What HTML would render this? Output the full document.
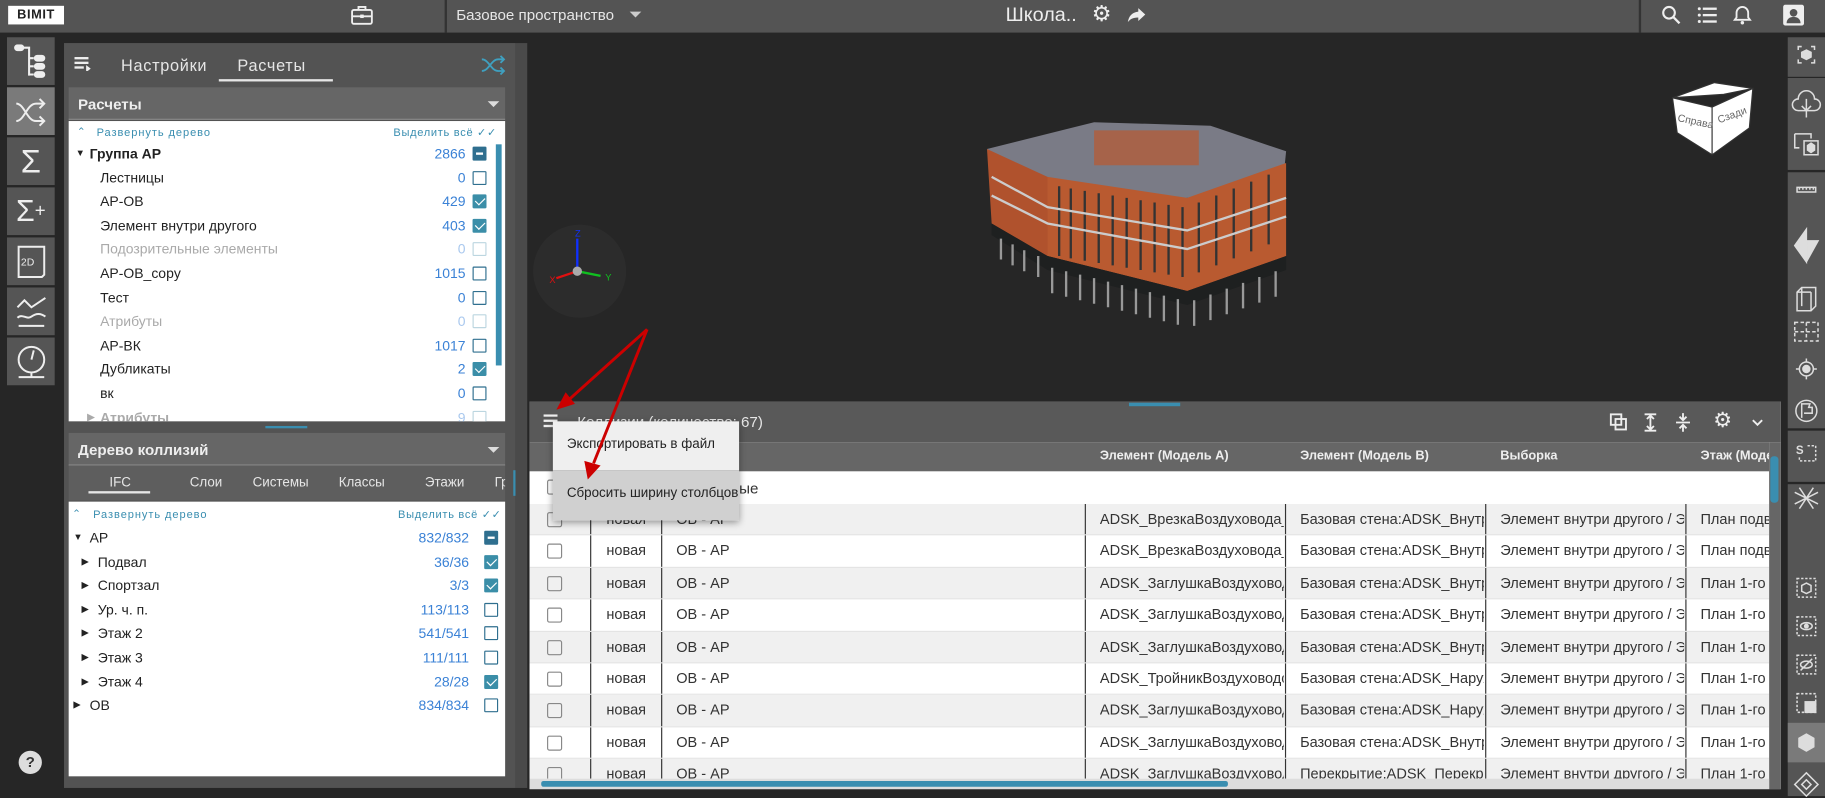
<!DOCTYPE html>
<html><head><meta charset="utf-8">
<style>
*{box-sizing:border-box;margin:0;padding:0}
body{width:1825px;height:796px;overflow:hidden;background:#262626;font-family:"Liberation Sans",sans-serif;position:relative;font-size:12px}
#w{position:absolute;left:0;top:0;width:1568px;height:684px;transform:scale(1.16390);transform-origin:0 0}
.a{position:absolute}
.top{left:0;top:0;width:1568px;height:28px;background:#545454}
.lb{left:6px;width:41px;height:41px;background:#555;display:flex;align-items:center;justify-content:center}
.row{position:absolute;left:0;width:100%;height:20.6px;font-size:12px;color:#222;line-height:20.6px}
.num{position:absolute;right:26px;color:#3b82d6;font-size:12px}
.cb{position:absolute;right:8px;top:4px;width:12px;height:12px;border:1.5px solid #2f6f8f;border-radius:1px;background:#fff}
.cb.on{background:#3b8ea8;border-color:#3b8ea8}
.cb.on:after{content:"";position:absolute;left:2.5px;top:0px;width:4px;height:7px;border:solid #fff;border-width:0 1.5px 1.5px 0;transform:rotate(45deg)}
.cb.dim{border-color:#bcd6e0}
.cb.min{background:#2f6f8f;border-color:#2f6f8f}
.cb.min:after{content:"";position:absolute;left:2px;top:4px;width:6px;height:1.5px;background:#fff}
.dim{color:#aaa}
.tr{position:absolute;left:0;width:1065px;height:27.4px;font-size:12.5px;color:#333;line-height:27.4px;border-bottom:1px solid #e4e4e4}
.tr span{position:absolute;white-space:nowrap;overflow:hidden}
.rb{left:1536px;width:32px;background:#555}
</style></head><body><div id="w">
<div class="a top"></div>
<div class="a" style="left:7px;top:5px;width:48px;height:16px;background:#fff;color:#222;font-weight:bold;font-size:11px;text-align:center;line-height:16px;letter-spacing:0.5px">BIMIT</div>
<svg class="a" style="left:301px;top:4px" width="20" height="18" viewBox="0 0 20 18"><rect x="1.5" y="4.5" width="17" height="12" rx="1.5" fill="none" stroke="#eee" stroke-width="1.6"/><path d="M7 4.5V2h6v2.5M1.5 10h17" stroke="#eee" stroke-width="1.6" fill="none"/><rect x="8.5" y="8.5" width="3" height="3" fill="#eee"/></svg>
<div class="a" style="left:382px;top:0;width:2px;height:28px;background:#333"></div>
<div class="a" style="left:392px;top:5px;color:#e6e6e6;font-size:13px">Базовое пространство</div>
<div class="a" style="left:541px;top:10px;border:5px solid transparent;border-top:5px solid #ccc"></div>
<div class="a" style="left:864px;top:3px;color:#eee;font-size:17px">Школа..</div>
<div class="a" style="left:938px;top:1px;color:#eee;font-size:19px">⚙</div>
<svg class="a" style="left:968px;top:5px" width="18" height="16" viewBox="0 0 18 16"><path d="M10 2l6 5.5-6 5.5V10C5 10 3 11.5 1 14c1-5 3-8 9-9z" fill="#eee"/></svg>
<div class="a" style="left:1408px;top:0;width:2px;height:28px;background:#333"></div>
<svg class="a" style="left:1427px;top:4px" width="18" height="18"><circle cx="7" cy="7" r="5" stroke="#eee" stroke-width="1.8" fill="none"/><path d="M11 11l5 5" stroke="#eee" stroke-width="2"/></svg>
<svg class="a" style="left:1458px;top:5px" width="18" height="16"><g fill="#eee"><circle cx="2" cy="2.5" r="1.3"/><circle cx="2" cy="8" r="1.3"/><circle cx="2" cy="13.5" r="1.3"/><rect x="5" y="1.5" width="12" height="2"/><rect x="5" y="7" width="12" height="2"/><rect x="5" y="12.5" width="12" height="2"/></g></svg>
<svg class="a" style="left:1488px;top:4px" width="20" height="18"><path d="M9 2a5 5 0 0 1 5 5v4l1.5 2h-13L4 11V7a5 5 0 0 1 5-5z" fill="none" stroke="#eee" stroke-width="1.6"/><circle cx="9" cy="15.5" r="1.5" fill="#eee"/></svg>
<svg class="a" style="left:1532px;top:4px" width="18" height="18"><rect width="18" height="18" rx="2" fill="#eee"/><circle cx="9" cy="7" r="3.3" fill="#545454"/><path d="M3 16c0-4 3-5.5 6-5.5s6 1.5 6 5.5z" fill="#545454"/></svg>

<div class="a lb" style="top:32px"><svg width="30" height="30" fill="none" stroke="#eee" stroke-width="1.8"><rect x="1" y="1" width="7" height="4" rx="2" fill="#eee"/><path d="M8 3h5v24M13 12h4M13 19h4M13 26h4"/><rect x="18" y="10" width="8" height="4" rx="2" fill="#eee"/><rect x="18" y="17" width="8" height="4" rx="2" fill="#eee"/><rect x="18" y="24" width="8" height="4" rx="2" fill="#eee"/></svg></div>
<div class="a lb" style="top:75px;background:#7a7a7a"><svg width="30" height="30" fill="none" stroke="#eee" stroke-width="1.7"><path d="M2 8c7 0 9 15 17 15h6M2 23c7 0 9-15 17-15h6M22 4l4 4-4 4M22 19l4 4-4 4"/></svg></div>
<div class="a lb" style="top:118px;color:#eee;font-size:28px">Σ</div>
<div class="a lb" style="top:161px;color:#eee;font-size:26px">Σ<span style="font-size:16px">+</span></div>
<div class="a lb" style="top:204px"><svg width="26" height="30" fill="none" stroke="#eee" stroke-width="1.7"><path d="M2 2h22v24l-2 2H2z"/><text x="4" y="18" font-size="9" fill="#eee" stroke="none" font-family="Liberation Sans">2D</text></svg></div>
<div class="a lb" style="top:247px"><svg width="28" height="28" fill="none" stroke="#eee" stroke-width="1.7"><path d="M2 10l6-6 6 6 12-8M2 19c4-4 8 2 12-1s8-3 12 0M3 26h22"/></svg></div>
<div class="a lb" style="top:290px"><svg width="30" height="30" fill="none" stroke="#eee" stroke-width="1.7"><circle cx="15" cy="13" r="11"/><path d="M15 13l2-8M4 28h22M15 24v4"/></svg></div>
<div class="a" style="left:16px;top:645px;width:20px;height:20px;border-radius:50%;background:#ddd;color:#333;font-weight:bold;text-align:center;line-height:20px;font-size:13px">?</div>

<div class="a" style="left:55px;top:37px;width:388px;height:640px;background:#535353"></div>
<svg class="a" style="left:64px;top:49px" width="14" height="12" fill="#eee"><rect width="12" height="2"/><rect y="4" width="12" height="2"/><rect y="8" width="8" height="2"/><path d="M10 7l4 3-4 3z"/></svg>
<div class="a" style="left:104px;top:48px;color:#e6e6e6;font-size:14px;letter-spacing:0.6px">Настройки</div>
<div class="a" style="left:204px;top:48px;color:#e6e6e6;font-size:14px;letter-spacing:0.6px">Расчеты</div>
<div class="a" style="left:188px;top:68px;width:98px;height:2px;background:#e6e6e6"></div>
<svg class="a" style="left:413px;top:46px" width="22" height="20" fill="none" stroke="#3fa0c0" stroke-width="1.6"><path d="M1 5c6 0 8 10 14 10h5M1 15c6 0 8-10 14-10h5M17 2l3 3-3 3M17 12l3 3-3 3"/></svg>

<div class="a" style="left:59px;top:75px;width:375px;height:28px;background:#666;border-bottom:1px solid #888"></div>
<div class="a" style="left:67px;top:82px;color:#eee;font-size:13px;font-weight:bold">Расчеты</div>
<div class="a" style="left:419px;top:87px;border:5px solid transparent;border-top:5px solid #ddd"></div>
<div class="a" style="left:59px;top:104px;width:375px;height:258px;background:#fff;overflow:hidden">
 <div class="a" style="left:7px;top:4px;color:#3a8eb0;font-size:9px">⌃</div>
 <div class="a" style="left:24px;top:5px;color:#3a8eb0;font-size:9.5px;letter-spacing:0.8px">Развернуть дерево</div>
 <div class="a" style="left:279px;top:5px;color:#3a8eb0;font-size:9.5px;letter-spacing:0.6px">Выделить всё ✓✓</div>
 <div class="a" style="left:367px;top:20px;width:5px;height:190px;background:#3a8eb0"></div>
 <div style="position:absolute;left:0;top:18px;width:367px">
  <div class="row" style="top:0;font-weight:bold"><span style="position:absolute;left:6px;font-size:8px">▼</span><span style="position:absolute;left:18px">Группа АР</span><span class="num" style="font-weight:normal">2866</span><span class="cb min"></span></div>
  <div class="row" style="top:20.6px"><span style="position:absolute;left:27px">Лестницы</span><span class="num">0</span><span class="cb"></span></div>
  <div class="row" style="top:41.2px"><span style="position:absolute;left:27px">АР-ОВ</span><span class="num">429</span><span class="cb on"></span></div>
  <div class="row" style="top:61.8px"><span style="position:absolute;left:27px">Элемент внутри другого</span><span class="num">403</span><span class="cb on"></span></div>
  <div class="row dim" style="top:82.4px"><span style="position:absolute;left:27px">Подозрительные элементы</span><span class="num" style="color:#a9c8ee">0</span><span class="cb dim"></span></div>
  <div class="row" style="top:103px"><span style="position:absolute;left:27px">АР-ОВ_copy</span><span class="num">1015</span><span class="cb"></span></div>
  <div class="row" style="top:123.6px"><span style="position:absolute;left:27px">Тест</span><span class="num">0</span><span class="cb"></span></div>
  <div class="row dim" style="top:144.2px"><span style="position:absolute;left:27px">Атрибуты</span><span class="num" style="color:#a9c8ee">0</span><span class="cb dim"></span></div>
  <div class="row" style="top:164.8px"><span style="position:absolute;left:27px">АР-ВК</span><span class="num">1017</span><span class="cb"></span></div>
  <div class="row" style="top:185.4px"><span style="position:absolute;left:27px">Дубликаты</span><span class="num">2</span><span class="cb on"></span></div>
  <div class="row" style="top:206px"><span style="position:absolute;left:27px">вк</span><span class="num">0</span><span class="cb"></span></div>
  <div class="row dim" style="top:226.6px;font-weight:bold"><span style="position:absolute;left:16px;font-size:8px">▶</span><span style="position:absolute;left:27px">Атрибуты</span><span class="num" style="color:#a9c8ee;font-weight:normal">9</span><span class="cb dim"></span></div>
 </div>
</div>
<div class="a" style="left:228px;top:366px;width:36px;height:2px;background:#3a8eb0"></div>
<div class="a" style="left:59px;top:372px;width:375px;height:28px;background:#666;border-bottom:1px solid #888"></div>
<div class="a" style="left:67px;top:379px;color:#eee;font-size:13px;font-weight:bold">Дерево коллизий</div>
<div class="a" style="left:419px;top:384px;border:5px solid transparent;border-top:5px solid #ddd"></div>
<div class="a" style="left:59px;top:400px;width:375px;height:30px;background:#5e5e5e;color:#e6e6e6;font-size:11.5px;overflow:hidden">
 <span class="a" style="left:35px;top:9px">IFC</span><span class="a" style="left:17px;top:22px;width:53px;height:2px;background:#e6e6e6"></span>
 <span class="a" style="left:104px;top:9px">Слои</span><span class="a" style="left:158px;top:9px">Системы</span><span class="a" style="left:232px;top:9px">Классы</span><span class="a" style="left:306px;top:9px">Этажи</span><span class="a" style="left:366px;top:9px;white-space:nowrap">Группировки</span>
</div>
<div class="a" style="left:441px;top:404px;width:2px;height:22px;background:#3a8eb0"></div>
<div class="a" style="left:59px;top:431px;width:375px;height:236px;background:#fff;overflow:hidden">
 <div class="a" style="left:3px;top:5px;color:#3a8eb0;font-size:9px">⌃</div>
 <div class="a" style="left:21px;top:6px;color:#3a8eb0;font-size:9.5px;letter-spacing:0.8px">Развернуть дерево</div>
 <div class="a" style="left:283px;top:6px;color:#3a8eb0;font-size:9.5px;letter-spacing:0.6px">Выделить всё ✓✓</div>
 <div style="position:absolute;left:0;top:21px;width:375px">
  <div class="row" style="top:0"><span style="position:absolute;left:4px;font-size:8px">▼</span><span style="position:absolute;left:18px">АР</span><span class="num" style="right:31px">832/832</span><span class="cb min" style="right:6px"></span></div>
  <div class="row" style="top:20.6px"><span style="position:absolute;left:11px;font-size:8px">▶</span><span style="position:absolute;left:25px">Подвал</span><span class="num" style="right:31px">36/36</span><span class="cb on" style="right:6px"></span></div>
  <div class="row" style="top:41.2px"><span style="position:absolute;left:11px;font-size:8px">▶</span><span style="position:absolute;left:25px">Спортзал</span><span class="num" style="right:31px">3/3</span><span class="cb on" style="right:6px"></span></div>
  <div class="row" style="top:61.8px"><span style="position:absolute;left:11px;font-size:8px">▶</span><span style="position:absolute;left:25px">Ур. ч. п.</span><span class="num" style="right:31px">113/113</span><span class="cb" style="right:6px"></span></div>
  <div class="row" style="top:82.4px"><span style="position:absolute;left:11px;font-size:8px">▶</span><span style="position:absolute;left:25px">Этаж 2</span><span class="num" style="right:31px">541/541</span><span class="cb" style="right:6px"></span></div>
  <div class="row" style="top:103px"><span style="position:absolute;left:11px;font-size:8px">▶</span><span style="position:absolute;left:25px">Этаж 3</span><span class="num" style="right:31px">111/111</span><span class="cb" style="right:6px"></span></div>
  <div class="row" style="top:123.6px"><span style="position:absolute;left:11px;font-size:8px">▶</span><span style="position:absolute;left:25px">Этаж 4</span><span class="num" style="right:31px">28/28</span><span class="cb on" style="right:6px"></span></div>
  <div class="row" style="top:144.2px"><span style="position:absolute;left:4px;font-size:8px">▶</span><span style="position:absolute;left:18px">ОВ</span><span class="num" style="right:31px">834/834</span><span class="cb" style="right:6px"></span></div>
 </div>
</div>

<div class="a" style="left:443px;top:37px;width:10px;height:640px;background:#4a4a4a"></div>
<div class="a" style="left:458px;top:193px;width:80px;height:80px;border-radius:50%;background:#2c2c2c"></div>
<svg class="a" style="left:458px;top:193px" width="80" height="80"><path d="M38 40V12" stroke="#1030ff" stroke-width="2"/><path d="M38 40l20 4" stroke="#10c020" stroke-width="2"/><path d="M38 40l-18 6" stroke="#e01010" stroke-width="2"/><circle cx="38" cy="40" r="4" fill="#aaa"/><text x="36" y="10" fill="#1030ff" font-size="8" font-family="Liberation Sans">Z</text><text x="62" y="48" fill="#10c020" font-size="8" font-family="Liberation Sans">Y</text><text x="14" y="50" fill="#e01010" font-size="8" font-family="Liberation Sans">X</text></svg>
<svg class="a" style="left:840px;top:100px" width="270" height="195" viewBox="0 0 270 195">
 <polygon points="8,28 100,5 200,8 265,30 262,60 180,70 60,80" fill="#7a7b86"/>
 <polygon points="8,28 60,52 60,120 12,92" fill="#b0522d"/>
 <polygon points="60,52 180,70 265,40 265,120 180,150 60,120" fill="#b95a30"/>
 <g stroke="#333" stroke-width="2"><path d="M70 60v60M80 62v60M92 64v60M104 66v60M116 68v60M128 70v60M140 72v60M152 74v60M164 76v60M176 78v60M190 74v60M205 68v60M220 62v60M235 56v60M250 50v60"/></g>
 <path d="M12 52L60 78 180 98 265 70M12 68L60 92 180 114 265 86" stroke="#ccc" stroke-width="2" fill="none"/>
 <polygon points="60,120 180,150 265,120 265,132 180,162 60,132 12,102 12,92" fill="#1e2020"/>
 <g stroke="#999" stroke-width="2"><path d="M20 105v18M30 110v18M40 115v18M52 120v18M64 130v22M76 133v22M88 136v22M100 139v22M112 142v22M124 145v22M136 148v22M148 151v22M160 154v22M172 157v22M186 158v22M200 153v22M214 148v22M228 143v22M242 138v22M256 133v22"/></g>
 <rect x="100" y="12" width="90" height="30" fill="#b95a30" opacity="0.7"/>
</svg>
<svg class="a" style="left:1433px;top:68px" width="74" height="68"><polygon points="4,16 48,13 73,8 40,3" fill="#fff" stroke="#333"/><polygon points="4,16 38,24 38,65 8,46" fill="#fff" stroke="#333"/><polygon points="38,24 73,8 70,42 38,65" fill="#fff" stroke="#333"/><text x="8" y="36" font-size="9" fill="#666" font-family="Liberation Sans" transform="rotate(12 8 36)">Справа</text><text x="44" y="38" font-size="9" fill="#666" font-family="Liberation Sans" transform="rotate(-20 44 38)">Сзади</text></svg>

<div class="a rb" style="top:32px;height:34px"></div>
<div class="a rb" style="top:67px;height:79px"></div>
<div class="a rb" style="top:148px;height:220px"></div>
<div class="a rb" style="top:370px;height:44px"></div>
<div class="a rb" style="top:416px;height:268px"></div>
<svg class="a" style="left:1536px;top:31px" width="32" height="653" fill="none" stroke="#ddd" stroke-width="1.3">
 <path d="M9 12V9h3M20 9h3v3M23 20v3h-3M12 23H9v-3"/><polygon points="16,12 20,14 20,18 16,20 12,18 12,14" fill="#ddd"/>
 <path d="M16 70V54M12 60l4 4 4-4M9 64a5 5 0 0 1 0-10 7 7 0 0 1 14 0 5 5 0 0 1 0 10z"/>
 <path d="M6 84h14v4M6 84v12h4M14 90h12v12H14z"/><polygon points="20,92 23,94 23,98 20,100 17,98 17,94" fill="#ddd"/>
 <path d="M8 130h16v4H8zM10 130v2M13 130v2M16 130v2M19 130v2M22 130v2"/>
 <path d="M6 180l10-14v28zM16 166v10h10L16 194" fill="#ddd"/>
 <path d="M8 220l4-4h12v16l-4 4H8zM12 216v16M20 220v16M8 220h12"/>
 <path d="M6 246h20v16H6zM16 246v16M6 254h20" stroke-dasharray="3 2"/>
 <circle cx="16" cy="286" r="6"/><circle cx="16" cy="286" r="3" fill="#ddd"/><path d="M16 277v3M16 292v3M7 286h3M22 286h3"/>
 <circle cx="16" cy="322" r="9"/><path d="M12 328v-12h7l-1 3h3v5h-7"/>
 <text x="7" y="359" font-size="10" fill="#ddd" stroke="none" font-weight="bold" font-family="Liberation Sans">S</text><path d="M17 352h7v13h-14v-4" stroke-dasharray="2 1.5"/>
 <path d="M6 392l20 10M6 402l20-10M10 388l12 18M22 388l-12 18"/>
 <rect x="8" y="466" width="16" height="16" stroke-dasharray="2 1.5"/><path d="M16 470l4 2v5l-4 2-4-2v-5z"/>
 <rect x="8" y="499" width="16" height="16" stroke-dasharray="2 1.5"/><ellipse cx="16" cy="507" rx="5" ry="3"/><circle cx="16" cy="507" r="1.5" fill="#ddd"/>
 <rect x="8" y="532" width="16" height="16" stroke-dasharray="2 1.5"/><ellipse cx="16" cy="540" rx="5" ry="3"/><path d="M11 545l10-10"/>
 <rect x="8" y="565" width="16" height="16" stroke-dasharray="2 1.5"/><rect x="15" y="572" width="9" height="9" fill="#ddd"/>
</svg>
<div class="a" style="left:1536px;top:621px;width:32px;height:34px;background:#7a7a7a"></div>
<svg class="a" style="left:1544px;top:629px" width="16" height="18" fill="#ddd"><path d="M8 1l7 4v8l-7 4-7-4V5z"/></svg>
<svg class="a" style="left:1540px;top:662px" width="24" height="24" fill="none" stroke="#ddd" stroke-width="1.3"><path d="M12 2l10 10-10 10L2 12z"/><path d="M12 8l4 4-4 4-4-4z"/></svg>

<div class="a" style="left:455px;top:345px;width:1075px;height:333px;background:#fff"></div>
<div class="a" style="left:455px;top:345px;width:1075px;height:35px;background:#595959"></div>
<div class="a" style="left:970px;top:346px;width:44px;height:3px;background:#3a8eb0"></div>
<svg class="a" style="left:467px;top:356px" width="14" height="12" fill="#eee"><rect width="12" height="2"/><rect y="4.5" width="12" height="2"/><rect y="9" width="12" height="2"/></svg>
<div class="a" style="left:496px;top:355px;color:#e6e6e6;font-size:13px">Коллизии (количество: 67)</div>
<svg class="a" style="left:1382px;top:353px" width="140" height="20" fill="none" stroke="#eee" stroke-width="1.6"><rect x="2" y="3" width="9" height="9"/><rect x="6" y="7" width="9" height="9"/><path d="M31 3h10M31 17h10M36 5v10M33 7l3-3 3 3M33 13l3 3 3-3"/><path d="M58 10h12M64 2v5M61 5l3 3 3-3M64 18v-5M61 15l3-3 3 3"/><path d="M124 8l4 4 4-4"/></svg>
<div class="a" style="left:1472px;top:352px;color:#eee;font-size:18px;line-height:18px">⚙</div>
<div class="a" style="left:455px;top:380px;width:1065px;height:25px;background:#666;color:#eee;font-size:11px;font-weight:bold">
 <span class="a" style="left:490px;top:6px">Элемент (Модель А)</span><span class="a" style="left:662px;top:6px">Элемент (Модель В)</span><span class="a" style="left:834px;top:6px">Выборка</span><span class="a" style="left:1006px;top:6px;white-space:nowrap">Этаж (Моде</span>
</div>
<div class="a" style="left:455px;top:405px;width:1065px;height:28px;background:#fff"><span class="a" style="left:15px;top:7px;width:13px;height:13px;border:1.5px solid #888;border-radius:2px"></span><span class="a" style="left:180px;top:7px;font-size:13px;color:#333">ые</span></div>
<div class="a" style="left:455px;top:433px;width:1065px;height:236px;overflow:hidden"><div id="rows"></div></div>
<script>
var h='',A=['ADSK_ВрезкаВоздуховода_Г','ADSK_ВрезкаВоздуховода_Г','ADSK_ЗаглушкаВоздуховод','ADSK_ЗаглушкаВоздуховод','ADSK_ЗаглушкаВоздуховод','ADSK_ТройникВоздуховодо','ADSK_ЗаглушкаВоздуховод','ADSK_ЗаглушкаВоздуховод','ADSK_ЗаглушкаВоздуховод'],
B=['Базовая стена:ADSK_Внутре','Базовая стена:ADSK_Внутре','Базовая стена:ADSK_Внутре','Базовая стена:ADSK_Внутре','Базовая стена:ADSK_Внутре','Базовая стена:ADSK_Наруж','Базовая стена:ADSK_Наруж','Базовая стена:ADSK_Внутре','Перекрытие:ADSK_Перекры'],
E=['План подв','План подв','План 1-го э','План 1-го э','План 1-го э','План 1-го э','План 1-го э','План 1-го э','План 1-го э'];
for(var i=0;i<9;i++){var y=i*27.4;h+='<div class="tr" style="top:'+y+'px;background:'+(i%2?'#fff':'#f0f0f0')+'"><span style="left:15px;top:7px;width:13px;height:13px;border:1.5px solid #888;border-radius:2px"></span><span style="left:52px;width:1px;height:100%;background:#333"></span><span style="left:66px">новая</span><span style="left:113px;width:1px;height:100%;background:#333"></span><span style="left:126px">ОВ - АР</span><span style="left:477px;width:1px;height:100%;background:#333"></span><span style="left:490px;width:158px">'+A[i]+'</span><span style="left:649px;width:1px;height:100%;background:#333"></span><span style="left:662px;width:158px">'+B[i]+'</span><span style="left:821px;width:1px;height:100%;background:#333"></span><span style="left:834px;width:158px">Элемент внутри другого / Э</span><span style="left:993px;width:1px;height:100%;background:#333"></span><span style="left:1006px;width:60px">'+E[i]+'</span></div>';}
document.getElementById('rows').outerHTML=h;
</script>
<div class="a" style="left:1520px;top:380px;width:10px;height:298px;background:#666"></div>
<div class="a" style="left:1521px;top:392px;width:7px;height:40px;background:#3a8eb0;border-radius:3px"></div>
<div class="a" style="left:455px;top:669px;width:1065px;height:9px;background:#ddd"></div>
<div class="a" style="left:465px;top:671px;width:590px;height:5px;background:#3a8eb0;border-radius:2px"></div>
<div class="a" style="left:475px;top:362px;width:160px;height:85px;box-shadow:0 2px 6px rgba(0,0,0,.4)"></div>
<div class="a" style="left:475px;top:362px;width:160px;height:42px;background:#efefef;font-size:11.5px;color:#222;padding:14px 0 0 12px">Экспортировать в файл</div>
<div class="a" style="left:475px;top:404px;width:160px;height:43px;background:#d0d0d0;font-size:11.5px;color:#222;padding:14px 0 0 12px">Сбросить ширину столбцов</div>
<svg class="a" style="left:0;top:0" width="1568" height="684"><g stroke="#c00" stroke-width="2.5" fill="#c00"><path d="M556 283L487 345"/><path d="M556 283L510 398"/><polygon points="478,352 486,337 494,347" stroke="none"/><polygon points="505,412 502,396 516,400" stroke="none"/></g></svg>
</div></body></html>
